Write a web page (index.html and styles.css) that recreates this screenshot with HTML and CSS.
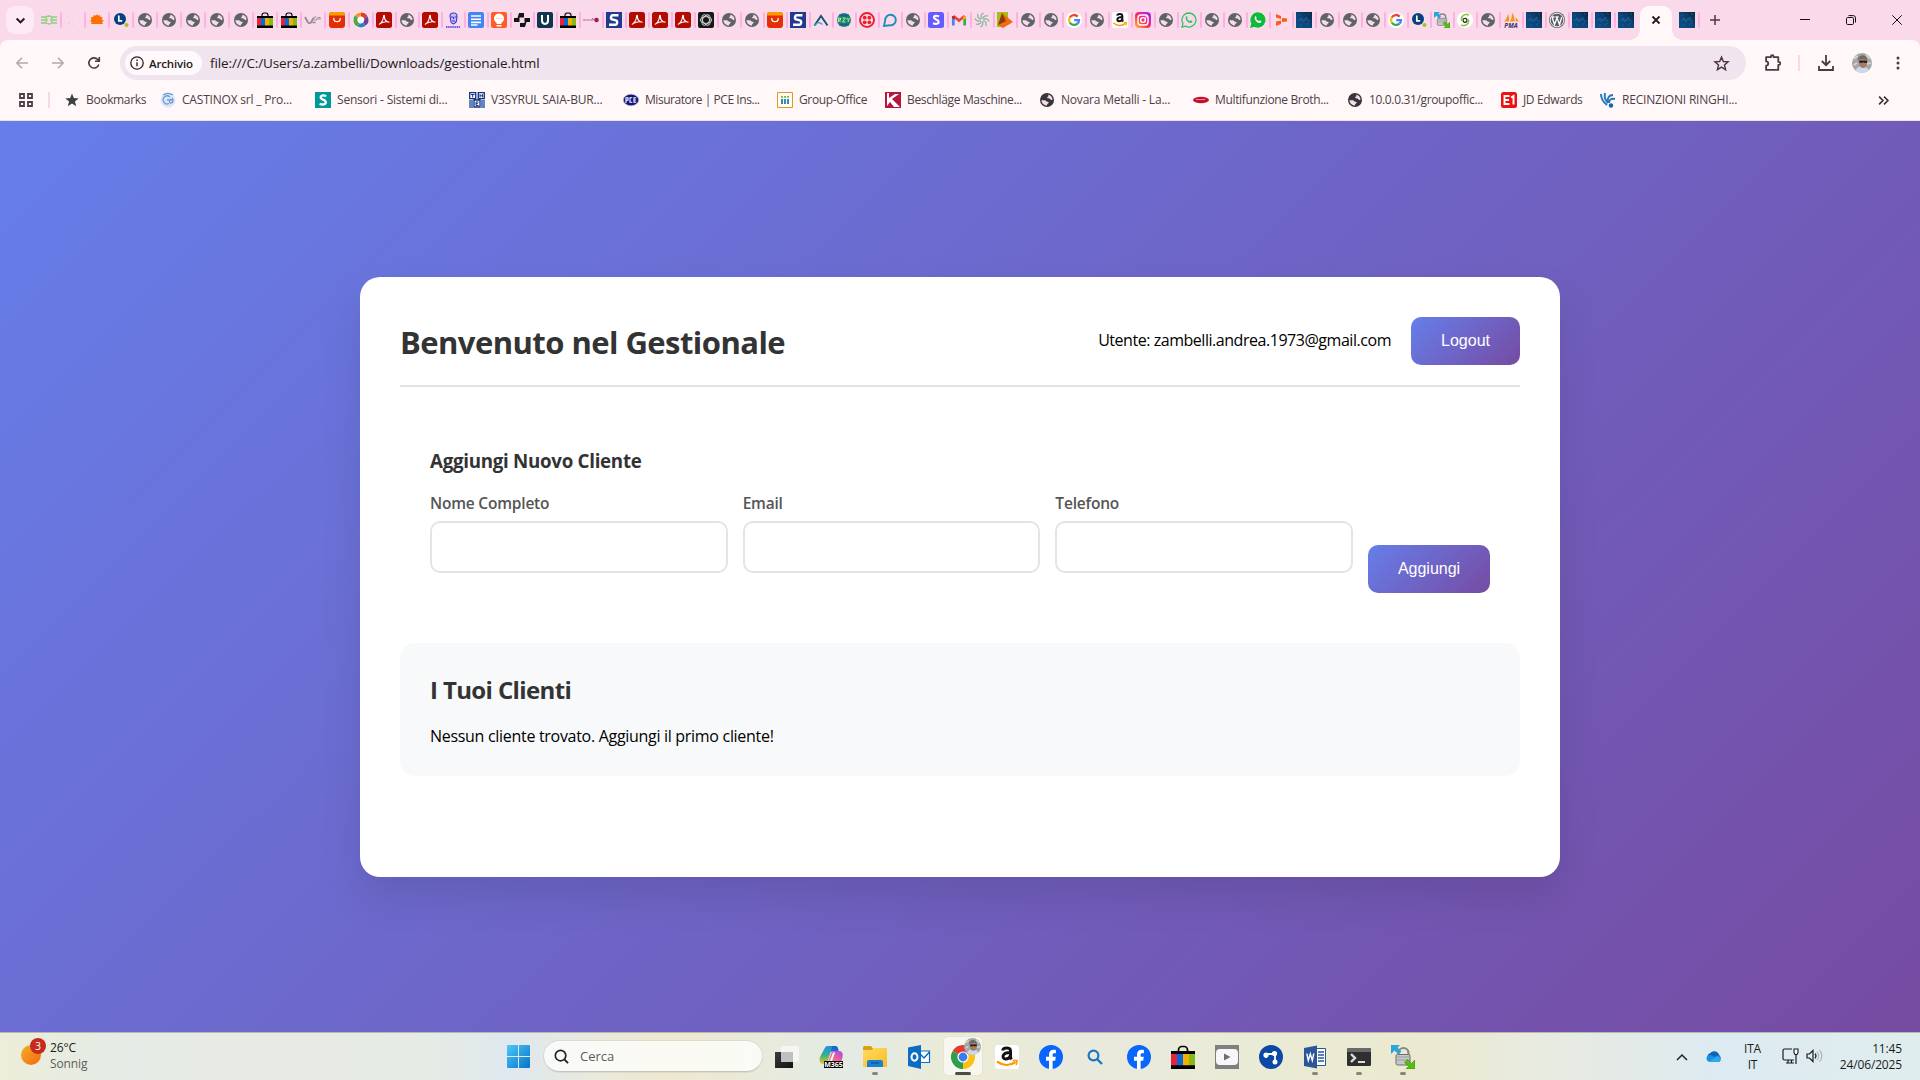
FILE: index.html
```html
<!DOCTYPE html>
<html lang="it">
<head>
<meta charset="utf-8">
<title>Gestionale</title>
<link rel="stylesheet" href="styles.css">
</head>
<body>
<svg class="defs" aria-hidden="true">
  <defs>
    <linearGradient id="gWin" x1="0" y1="0" x2="1" y2="1"><stop offset="0" stop-color="#4cc8f8"/><stop offset="1" stop-color="#0674c8"/></linearGradient>
    <linearGradient id="gInsta" x1="0" y1="1" x2="1" y2="0"><stop offset="0" stop-color="#ffc93c"/><stop offset=".4" stop-color="#fb3a4a"/><stop offset=".75" stop-color="#d61ec0"/><stop offset="1" stop-color="#7a3cf0"/></linearGradient>
    <linearGradient id="gSun" x1="0" y1="0" x2="1" y2="1"><stop offset="0" stop-color="#f0b429"/><stop offset=".5" stop-color="#f58a1c"/><stop offset="1" stop-color="#ee6a0a"/></linearGradient>
    <linearGradient id="gFold" x1="0" y1="0" x2="1" y2="1"><stop offset="0" stop-color="#ffdc60"/><stop offset="1" stop-color="#f9bb2a"/></linearGradient>
    <linearGradient id="gCopA" x1="0" y1="0" x2="0" y2="1"><stop offset="0" stop-color="#1f8fe8"/><stop offset=".5" stop-color="#35b28a"/><stop offset="1" stop-color="#f2c51c"/></linearGradient>
    <linearGradient id="gCopB" x1="1" y1="0" x2="0" y2="1"><stop offset="0" stop-color="#a04be8"/><stop offset=".5" stop-color="#e85aa8"/><stop offset="1" stop-color="#ff9a54"/></linearGradient>
    <linearGradient id="gDark" x1="0" y1="0" x2="1" y2="1"><stop offset="0" stop-color="#3c3c3c"/><stop offset="1" stop-color="#111"/></linearGradient>
    <linearGradient id="gTech" x1="0" y1="1" x2="1" y2="0"><stop offset="0" stop-color="#0b4f8a"/><stop offset=".5" stop-color="#0c4577"/><stop offset="1" stop-color="#08243f"/></linearGradient>
  </defs>
  <symbol id="globe" viewBox="0 0 16 16"><circle cx="8" cy="8" r="7" fill="currentColor"/><path class="cut" d="M9.200 2.600c2.400.5 4.200 2.600 4.400 5-.5.5-1 .6-1.700.3-.5-.3-.6-1.100-1.300-1.400-.8-.3-1.800.1-2.300-.5-.5-.7.200-1.300.8-1.600.5-.3.400-1 .1-1.800zM2.400 8.300h3.300c1.400 0 1.500 1.300 2.600 1.500.8.200 1.300 0 1.400.8 0 .9-1.300 1.100-1.600 1.900-.2.400-.2.800-.1 1.100-3-.1-5.400-2.400-5.600-5.300z"/></symbol>
  <symbol id="bag" viewBox="0 0 16 16"><path d="M5 5V3.200A2.200 2.200 0 0 1 7.200 1h1.600A2.200 2.200 0 0 1 11 3.200V5" fill="none" stroke="#000" stroke-width="1.100"/><path d="M0 4h16v12H0z"/><path d="M0 6h4v7.500H0z" fill="#e5243b"/><path d="M4 6h4v7.500H4z" fill="#0968d8"/><path d="M8 6h4v7.500H8z" fill="#f5af02"/><path d="M12 6h4v7.500h-4z" fill="#86b817"/></symbol>
  <symbol id="acro" viewBox="0 0 16 16"><rect width="16" height="16" rx="2.500" fill="#b30b00"/><path d="M3.300 12.300c1.500-.6 4.100-4 4.400-8.400 0-.7.700-.7.700 0-.1 3 1.500 5.600 4.600 6.400M4 11.400c2.200-1.200 5.500-1.900 9-1.400" fill="none" stroke="#fff" stroke-width="1.100" stroke-linecap="round"/></symbol>
  <symbol id="ali" viewBox="0 0 16 16"><rect width="16" height="16" rx="3" fill="#e62e04"/><path d="M0 3a3 3 0 0 1 3-3h10a3 3 0 0 1 3 3v.600H0z" fill="#ff9a00"/><path d="M4.800 6.500a3.200 3.200 0 0 0 6.400 0" fill="none" stroke="#fff" stroke-width="1.300" stroke-linecap="round"/></symbol>
  <symbol id="lisec" viewBox="0 0 16 16"><circle cx="7" cy="7" r="6" fill="#06407f"/><path d="M5.800 3.500v5.400h3.400" fill="none" stroke="#fff" stroke-width="1.700"/><circle cx="13.500" cy="13" r="2" fill="#a4c520"/></symbol>
  <symbol id="tech" viewBox="0 0 16 16"><path d="M0 0h16v16H0z" fill="url(#gTech)"/><path d="M2 8h2l1-2 1.500 4L8 7l1 1.500L10.500 5 12 9h2" fill="none" stroke="#2f74ad" stroke-width=".6"/><path d="M12 1l2 2M10 13l3-2M3 3l1 1M8 2v1M4 13h2" stroke="#2a679c" stroke-width=".7"/></symbol>
  <symbol id="google" viewBox="0 0 16 16"><circle cx="8" cy="8" r="8" fill="#fff"/><g fill="none" stroke-width="2.300"><path d="M11.700 4.600A5 5 0 0 0 3.700 5.500" stroke="#ea4335"/><path d="M3.700 5.500a5 5 0 0 0 0 5" stroke="#fbbc05"/><path d="M3.700 10.500a5 5 0 0 0 7.700 1.100" stroke="#34a853"/><path d="M11.400 11.600A4.700 4.700 0 0 0 13 8.200H8.200" stroke="#4285f4"/></g></symbol>
  <symbol id="amazon" viewBox="0 0 24 24"><rect width="24" height="24" rx="3" fill="#fff"/><path d="M7.800 5.500C8 2.500 15.500 1.500 15.500 6v6c0 1 .5 1.500 1.200 2.200M15.500 7.500C6 7.500 7 14 10.500 14c2.500 0 4.500-1.500 5-4" fill="none" stroke="#111" stroke-width="3"/><path d="M2 16.500c6 4.500 13 4.500 18.500.5" fill="none" stroke="#ff9900" stroke-width="2.200"/><path d="M17.500 15.500h4.500l-.8 4.500" fill="none" stroke="#ff9900" stroke-width="1.500"/></symbol>
  <symbol id="essebox" viewBox="0 0 16 16"><path d="M0 0h16v16H0z" fill="#203a8f"/><path d="M12.500 3.200H6.800c-2 0-2.600 3.600-.6 4.200l3.600 1c2.200.6 1.600 4.400-.6 4.400H3" fill="none" stroke="#fff" stroke-width="2.400"/></symbol>
  <symbol id="winscp" viewBox="0 0 24 24"><path d="M7.500 11V8a5 5 0 0 1 10 0v3" fill="none" stroke="#888" stroke-width="2.200"/><rect x="5" y="9.500" width="14" height="10.500" rx="1.500" fill="#c8c8c8" stroke="#6e6e6e"/><path d="M6 12h12M6 15h12" stroke="#9b9b9b"/><path d="M0 0h9L6.500 2.600l4 4-3 3-4-4L0 9z" fill="#2aa7d8"/><path d="M24 24h-9l2.500-2.600-4-4 3-3 4 4L24 15z" fill="#55bd14" stroke="#358a08" stroke-width=".6"/></symbol>
  <symbol id="photo" viewBox="0 0 20 20"><circle cx="10" cy="10" r="10" fill="#a3a8a4"/><path d="M1.500 6l4-3M14 2l4 4M2 12l3-2M15 11l4-1" stroke="#d5d8d3" stroke-width="1.600"/><path d="M3.500 17.500C5 14 7 13.500 10 13.500s6 1.500 7 3.600A10 10 0 0 1 3.500 17.500z" fill="#c9d9ee"/><ellipse cx="11" cy="9.500" rx="4" ry="5.500" fill="#a87862"/><path d="M6 8c-1-7 9-8 9.500-1l-.5 1-1-2H7.500z" fill="#6d6c69"/><path d="M7 7.700h8v2h-3l-.8-.8-.8.800H7.500z" fill="#1a1a1a"/></symbol>
  <symbol id="facebook" viewBox="0 0 24 24"><circle cx="12" cy="12" r="12" fill="#0866ff"/><path d="M10 24v-8.300H7v-3.900h3V9.700c0-3.400 1.700-5 4.700-5 .8 0 1.600.1 2.200.2v3.300h-1.700c-1.100 0-1.600.6-1.600 1.700v1.900h3.200l-.6 3.900h-2.600V24z" fill="#fff"/></symbol>
  <symbol id="whats" viewBox="0 0 16 16"><path d="M8 1a7 7 0 0 0-6 10.600L1 15l3.500-.9A7 7 0 1 0 8 1z" class="wa"/><path d="M5 4.500c.6-.6 1-.4 1.200.2l.4 1c.1.4-.3.700-.5 1 .6 1.200 1.500 2 2.700 2.500.4-.3.700-1 1.100-.8l1.300.7c.5.300-.1 1.700-1.100 1.900C7.500 11.500 3.500 7.500 5 4.500z" class="ph"/></symbol>
</svg>

<header class="browser">
  <div class="tabstrip">
    <div class="tabsearch"><svg viewBox="0 0 10 10"><path d="M1.500 3.200L5 6.700l3.500-3.500" fill="none" stroke="#241a20" stroke-width="1.900"/></svg></div>
    <div class="tabs loose">
      <i class="tab"><svg viewBox="0 0 16 16"><path d="M0 5h4.500l1.500 3-1.500 3H0M16 5h-4.500L10 8l1.500 3H16M0 8h5M11 8h5M5 5c2-1.300 4-1.300 6 0M5 11c2 1.300 4 1.300 6 0" fill="none" stroke="#8fd07a" stroke-width="1.300"/></svg></i>
      <i class="tab"><svg viewBox="0 0 16 16"><path d="M3 4h1M7 6h1M3 11h2M8 13h1" stroke="#e6cfdb" stroke-width="1.500"/></svg></i>
      <i class="tab"><svg viewBox="0 0 16 16"><path d="M5 3l2 .8L8 2l1.200 1.800L11 3l.5 2 2.200.2-.9 2L15 9l-2 .8L14 12H2l.8-2L1 9l1.500-1.500L1.800 5.300 4 5z" fill="#fd7000"/></svg></i>
      <i class="tab"><svg><use href="#lisec"/></svg></i>
      <i class="tab"><svg><use href="#globe"/></svg></i>
      <i class="tab"><svg><use href="#globe"/></svg></i>
      <i class="tab"><svg><use href="#globe"/></svg></i>
      <i class="tab"><svg><use href="#globe"/></svg></i>
      <i class="tab"><svg><use href="#globe"/></svg></i>
      <i class="tab"><svg><use href="#bag"/></svg></i>
      <i class="tab"><svg><use href="#bag"/></svg></i>
      <i class="tab"><svg viewBox="0 0 16 16"><path d="M0 5l3 5.500c1 1 2 1 3 0L8.500 6M7.500 10.500h3" fill="none" stroke="#8b8b8b" stroke-width="1.700"/><path d="M11.500 5H9v3h2.500V6.500M13 8V5l1 1.500L15 5v3" fill="none" stroke="#a0979c"/></svg></i>
      <i class="tab"><svg><use href="#ali"/></svg></i>
    </div>
    <div class="tabs">
      <i class="tab"><svg viewBox="0 0 16 16"><circle cx="8" cy="8" r="8" fill="#fff"/><g fill="none" stroke-width="4"><path d="M3.500 4.500A5.500 5.500 0 0 1 8 2.500" stroke="#f39a1e"/><path d="M8 2.500a5.500 5.500 0 0 1 5 3" stroke="#e4383a"/><path d="M13 5.500A5.500 5.500 0 0 1 11.500 12" stroke="#6f3f96"/><path d="M11.500 12a5.500 5.500 0 0 1-6 1" stroke="#2f7fc2"/><path d="M5.500 13a5.500 5.500 0 0 1-2-8.500" stroke="#4fa64a"/></g></svg></i>
      <i class="tab"><svg><use href="#acro"/></svg></i>
      <i class="tab"><svg><use href="#globe"/></svg></i>
      <i class="tab"><svg><use href="#acro"/></svg></i>
      <i class="tab"><svg viewBox="0 0 16 16"><path d="M5 4c0-4 7-4 7 0l-.5 5c-1 3-4 4-5.500 1zM6 5h2M9.500 5h2M7 9h3M8.500 5v2" fill="#c7bff2" stroke="#3e35e6" stroke-width="1.100"/><path d="M1 15h14" stroke="#3e35e6" stroke-width="1.500" stroke-dasharray="1.500 .6"/></svg></i>
      <i class="tab"><svg viewBox="0 0 16 16"><rect width="16" height="16" rx="2" fill="#4285f4"/><path d="M3 4h10M3 7.200h10M3 10.400h10M3 13h6.500" stroke="#fff" stroke-width="1.600"/></svg></i>
      <i class="tab"><svg viewBox="0 0 16 16"><rect width="16" height="16" rx="2" fill="#ff5a28"/><circle cx="8" cy="6.500" r="5" fill="#fff"/><path d="M5.500 11h5v1h-5zM5.500 13h5v1.500h-5z" fill="#fff"/><path d="M5 6.500h6" stroke="#ffd8cb"/></svg></i>
      <i class="tab"><svg viewBox="0 0 16 16"><path d="M5 1h5v4.500H5.500V10H0V6h3.500zM11 15H6v-4h4.500V6H16v4h-3.500z" fill="#101814"/></svg></i>
      <i class="tab"><svg viewBox="0 0 16 16"><rect width="16" height="16" rx="2" fill="#12344d"/><path d="M5 3v5.500c0 4.500 6 4.500 6 0V3" fill="none" stroke="#fff" stroke-width="2"/></svg></i>
      <i class="tab"><svg><use href="#bag"/></svg></i>
      <i class="tab"><svg viewBox="0 0 16 16"><path d="M0 8h10" stroke="#c38aa8" stroke-width="1.300" stroke-dasharray="3 .6"/><circle cx="13.500" cy="8" r="2.300" fill="#a01c55"/><path d="M9 6l3 3" stroke="#c65a86"/></svg></i>
      <i class="tab"><svg><use href="#essebox"/></svg></i>
      <i class="tab"><svg><use href="#acro"/></svg></i>
      <i class="tab"><svg><use href="#acro"/></svg></i>
      <i class="tab"><svg><use href="#acro"/></svg></i>
      <i class="tab"><svg viewBox="0 0 16 16"><rect width="16" height="16" rx="2" fill="#171717"/><g fill="none" stroke="#ddd" stroke-width=".9"><ellipse cx="8" cy="8" rx="5.700" ry="3.400"/><ellipse cx="8" cy="8" rx="5.700" ry="3.400" transform="rotate(60 8 8)"/><ellipse cx="8" cy="8" rx="5.700" ry="3.400" transform="rotate(120 8 8)"/></g></svg></i>
      <i class="tab"><svg><use href="#globe"/></svg></i>
      <i class="tab"><svg><use href="#globe"/></svg></i>
      <i class="tab"><svg><use href="#ali"/></svg></i>
      <i class="tab"><svg><use href="#essebox"/></svg></i>
      <i class="tab"><svg viewBox="0 0 16 16"><path d="M1.500 13.500L8 4l6.500 9.500" fill="none" stroke="#1b4f7c" stroke-width="1.900"/><path d="M1.500 13.500c3-3.500 5-3.700 8-1" fill="none" stroke="#31a8b8" stroke-width="1.400"/></svg></i>
      <i class="tab"><svg viewBox="0 0 16 16"><circle cx="8" cy="8" r="7" fill="#178a78"/><path d="M3 3.500h10M3 12.500h10" stroke="#1f5d8d" stroke-width="1.800"/><path d="M2.500 10V6h2v2h-2l2 2M6.500 6h2.800l-2.800 4h2.800M11 6l1.300 2L13.700 6M12.300 8v2" fill="none" stroke="#c9f08a" stroke-width=".9"/></svg></i>
      <i class="tab"><svg viewBox="0 0 16 16"><circle cx="8" cy="8" r="7" fill="#fbdcea" stroke="#ee1c2e" stroke-width="1.900"/><g fill="#ee1c2e"><circle cx="5.700" cy="5.700" r="1.900"/><circle cx="10.300" cy="5.700" r="1.900"/><circle cx="5.700" cy="10.300" r="1.900"/><circle cx="10.300" cy="10.300" r="1.900"/></g></svg></i>
      <i class="tab"><svg viewBox="0 0 16 16"><path d="M2 14l1.200-6A5.300 5.300 0 1 1 8 13.300z" fill="none" stroke="#1a90b8" stroke-width="1.900"/></svg></i>
      <i class="tab"><svg><use href="#globe"/></svg></i>
      <i class="tab"><svg viewBox="0 0 16 16"><rect width="16" height="16" rx="2.500" fill="#635bff"/><path d="M11 4.500C8 3 5.800 4 6 5.700c.2 2 4.700 1.800 4.700 4.200 0 2-3 2.600-5.700 1.300" fill="none" stroke="#fff" stroke-width="2.200"/></svg></i>
      <i class="tab"><svg viewBox="0 0 16 16"><g fill="none" stroke-width="2.700"><path d="M2.300 13.500V4" stroke="#4285f4"/><path d="M13.700 13.500V4" stroke="#34a853"/><path d="M2.300 4L8 8.500 13.700 4" stroke="#ea4335"/></g><path d="M12.300 4.200h2.700v2l-2.700 1.600z" fill="#fbbc04"/><path d="M1 4.200h2.700v3.600L1 6z" fill="#c5221f"/></svg></i>
      <i class="tab"><svg viewBox="0 0 16 16"><g fill="none" stroke="#7caf92" stroke-width="1.100"><path id="ray" d="M8 6.500C6 5 7 2 9.500 1"/><use href="#ray" transform="rotate(45 8 8)"/><use href="#ray" transform="rotate(90 8 8)"/><use href="#ray" transform="rotate(135 8 8)"/><use href="#ray" transform="rotate(180 8 8)"/><use href="#ray" transform="rotate(225 8 8)"/><use href="#ray" transform="rotate(270 8 8)"/><use href="#ray" transform="rotate(315 8 8)"/></g></svg></i>
      <i class="tab"><svg viewBox="0 0 16 16"><path d="M0 0h11v9l-6 6H0z" fill="#a6bf12"/><path d="M5 1l11 9-10 6-5-3z" fill="#f06a10"/><path d="M5 1l4 8-8 4z" fill="#8a3a14"/></svg></i>
      <i class="tab"><svg><use href="#globe"/></svg></i>
      <i class="tab"><svg><use href="#globe"/></svg></i>
      <i class="tab"><svg><use href="#google"/></svg></i>
      <i class="tab"><svg><use href="#globe"/></svg></i>
      <i class="tab"><svg><use href="#amazon"/></svg></i>
      <i class="tab"><svg viewBox="0 0 16 16"><rect width="16" height="16" rx="4" fill="url(#gInsta)"/><rect x="3" y="3" width="10" height="10" rx="3" fill="none" stroke="#fff" stroke-width="1.400"/><circle cx="8" cy="8" r="2.400" fill="none" stroke="#fff" stroke-width="1.400"/><circle cx="11" cy="5" r=".8" fill="#fff"/></svg></i>
      <i class="tab"><svg><use href="#globe"/></svg></i>
      <i class="tab wa-line"><svg><use href="#whats"/></svg></i>
      <i class="tab"><svg><use href="#globe"/></svg></i>
      <i class="tab"><svg><use href="#globe"/></svg></i>
      <i class="tab wa-full"><svg><use href="#whats"/></svg></i>
      <i class="tab"><svg viewBox="0 0 16 16"><path d="M3 2l5 2v3L3 5.500zM3 9.500L8 8.500v3.500l-5 2zM9 6l5 .500v3L9 10z" fill="#ff5b1c"/></svg></i>
      <i class="tab"><svg><use href="#tech"/></svg></i>
      <i class="tab"><svg><use href="#globe"/></svg></i>
      <i class="tab"><svg><use href="#globe"/></svg></i>
      <i class="tab"><svg><use href="#globe"/></svg></i>
      <i class="tab"><svg><use href="#google"/></svg></i>
      <i class="tab"><svg><use href="#lisec"/></svg></i>
      <i class="tab"><svg><use href="#winscp"/></svg></i>
      <i class="tab"><svg viewBox="0 0 16 16"><circle cx="8" cy="8" r="8" fill="#fff"/><circle cx="8" cy="8.300" r="2" fill="none" stroke="#1c2a1c" stroke-width="1.200"/><path d="M12 3C7 1 3 5 5 9M4 13c5 2 9-2 7-6" fill="none" stroke="#8cc63f" stroke-width="1.600"/></svg></i>
      <i class="tab"><svg><use href="#globe"/></svg></i>
      <i class="tab"><svg viewBox="0 0 16 16"><path d="M1 9.500C3 7.500 4 5 5 2c1 3 1.500 5 1 7.500zM7 9.500C8.500 7 9 4 9 .500c2 3 3 6 2.500 9zM12.500 9.500c.5-2 .5-3 0-4.500 1.500 1.500 2.500 3 3 4.500z" fill="#f7941d"/><text x="8" y="15.500" font-size="6.300" font-weight="700" font-style="italic" text-anchor="middle" fill="#35325f">PMA</text></svg></i>
      <i class="tab"><svg><use href="#tech"/></svg></i>
      <i class="tab"><svg viewBox="0 0 16 16"><circle cx="8" cy="8" r="8" fill="#5b6063"/><circle cx="8" cy="8" r="6.800" fill="none" stroke="#fff" stroke-width=".9"/><path d="M3 5l2.500 7.500L8 6l2.500 6.500L12.800 5M2.500 5h3M6.500 5h3" fill="none" stroke="#fff" stroke-width="1.300"/></svg></i>
      <i class="tab"><svg><use href="#tech"/></svg></i>
      <i class="tab"><svg><use href="#tech"/></svg></i>
      <i class="tab last"><svg><use href="#tech"/></svg></i>
    </div>
    <div class="tab-active"><svg viewBox="0 0 10 10"><path d="M1.500 1.500l7 7M8.500 1.500l-7 7" stroke="#241a20" stroke-width="1.800"/></svg></div>
    <div class="tabs after"><i class="tab"><svg><use href="#tech"/></svg></i></div>
    <svg class="newtab" viewBox="0 0 10 10"><path d="M5 0v10M0 5h10" stroke="#4c3743" stroke-width="1.500"/></svg>
    <div class="wincontrols">
      <svg viewBox="0 0 10 10"><path d="M0 4.500h10" stroke="#111"/></svg>
      <svg viewBox="0 0 10 10"><rect x=".5" y="2.500" width="7" height="7" rx="1.200" fill="none" stroke="#111"/><path d="M2.500.6h4.700a2.300 2.300 0 0 1 2.300 2.300v4.600" fill="none" stroke="#111"/></svg>
      <svg viewBox="0 0 10 10"><path d="M.3.3l9.400 9.400M9.700.3L.3 9.700" stroke="#111"/></svg>
    </div>
  </div>

  <div class="toolbar">
    <svg class="nav off" viewBox="0 0 12 12"><path d="M12 6H1M6 .8L.9 6 6 11.200"/></svg>
    <svg class="nav off" viewBox="0 0 12 12"><path d="M0 6h11M6 .8L11.100 6 6 11.200"/></svg>
    <svg class="nav" viewBox="0 0 12 12"><path d="M10.800 7.500a5.100 5.100 0 1 1-.9-4.800L11.300 4M11.300 0v4.300H7"/></svg>
    <div class="omnibox">
      <span class="chip"><svg viewBox="0 0 14 14"><circle cx="7" cy="7" r="6.200" fill="none" stroke="#2b2228" stroke-width="1.300"/><path d="M7 6.200v4M7 3.600v1.400" stroke="#2b2228" stroke-width="1.400"/></svg><b>Archivio</b></span>
      <span class="url">file:///C:/Users/a.zambelli/Downloads/gestionale.html</span>
      <svg class="star" viewBox="0 0 24 24"><path d="M12 3l2.600 6.200 6.700.5-5.100 4.400 1.600 6.600L12 17.200l-5.800 3.500 1.600-6.600L2.700 9.700l6.700-.5z" fill="none" stroke="#4c3743" stroke-width="2"/></svg>
    </div>
    <svg class="ext" viewBox="0 0 17 17"><path d="M2 3h4.500V2.500a1.300 1.300 0 0 1 2.600 0V3h4.400v4.500h.5a1.400 1.400 0 0 1 0 2.800h-.5V15H2v-4a2 2 0 0 0 0-4z" fill="none" stroke="#4c3743" stroke-width="1.700" stroke-linejoin="round"/></svg>
    <i class="vsep"></i>
    <svg class="dl" viewBox="0 0 16 16"><path d="M8 0v10M3.800 6L8 10.200 12.200 6M1 11v4h14v-4" fill="none" stroke="#4c3743" stroke-width="1.800"/></svg>
    <svg class="me"><use href="#photo"/></svg>
    <svg class="dots" viewBox="0 0 4 14"><circle cx="2" cy="2" r="1.500"/><circle cx="2" cy="7" r="1.500"/><circle cx="2" cy="12" r="1.500"/></svg>
  </div>

  <div class="bookmarks">
    <svg class="apps" viewBox="0 0 14 14"><path d="M1 1h4v4H1zM9 1h4v4H9zM1 9h4v4H1zM9 9h4v4H9z" fill="none" stroke="#4c3f47" stroke-width="1.800"/></svg>
    <i class="vsep"></i>
    <a class="bm w96"><svg viewBox="0 0 16 16"><path d="M8 1.600l1.800 4.500 4.900.3-3.800 3.100 1.300 4.800L8 11.600l-4.200 2.700 1.300-4.800-3.800-3.100 4.900-.3z" fill="#3d4043"/></svg><span>Bookmarks</span></a>
    <a class="bm w155 airy"><svg viewBox="0 0 16 16"><circle cx="8" cy="8" r="7.500" fill="#dbe7f7"/><g fill="none" stroke="#6f9bd8" stroke-width="1.300"><path d="M10 5a4 4 0 1 0-1 6.500M7 8h6M12 6c2 2 1 5-1 5s-2-3 0-4M3 3c3-2 7-2 10 0"/></g></svg><span>CASTINOX srl _ Pro...</span></a>
    <a class="bm airy"><svg viewBox="0 0 16 16"><path d="M0 0h16v16H0z" fill="#009999"/><path d="M11.200 4.200C8 2.700 5.400 3.700 5.600 5.600c.2 2.200 5.200 2 5.200 4.700 0 2.200-3.200 2.900-6.200 1.400" fill="none" stroke="#fff" stroke-width="2.300"/></svg><span>Sensori - Sistemi di...</span></a>
    <a class="bm airy"><svg viewBox="0 0 16 16"><path d="M0 0h16v16H0z" fill="#e8eefb"/><path d="M.7.700h6v6h-6zM9.300.700h6v6h-6zM5 8h6v7H5z" fill="#fff" stroke="#16337c" stroke-width="1.300"/><path d="M0 8h4v8H0zM12 8h4v8h-4z" fill="#6484bd"/><path d="M2 2.500h3.500M3.700 2.500V5.500M11 2v3.500M13.600 2v3.500M11 3.800h2.500M9.500 10H7v3.500h2.500M7 11.700h2" fill="none" stroke="#16337c"/></svg><span>V3SYRUL SAIA-BUR...</span></a>
    <a class="bm tight"><svg viewBox="0 0 16 16"><ellipse cx="8" cy="8" rx="7.700" ry="5.800" fill="#14147c" stroke="#b9b9d0" stroke-width=".7"/><path d="M3 11V5.700h2v2.500H3M9.300 5.700H7v4.600h2.300M13.300 5.700H11v4.600h2.300M11 8h2" fill="none" stroke="#fff" stroke-width="1.100"/></svg><span>Misuratore | PCE Ins...</span></a>
    <a class="bm w108"><svg viewBox="0 0 16 16"><path d="M.5.5h15v15H.5z" fill="#fffdf8" stroke="#e5951a"/><path d="M5 7v5M8 7v5M11 7v5" stroke="#1f7fa8" stroke-width="1.800"/><path d="M5 4v1.700M8 4v1.700M11 4v1.700" stroke="#74a93a" stroke-width="1.800"/></svg><span>Group-Office</span></a>
    <a class="bm"><svg viewBox="0 0 16 16"><path d="M0 0h16v16H0z" fill="#b5173b"/><path d="M2 1h2v5l6-4h4L7 7l8 8H9L5 10l-3 4z" fill="#fff"/></svg><span>Beschläge Maschine...</span></a>
    <a class="bm dark airy"><svg><use href="#globe"/></svg><span>Novara Metalli - La...</span></a>
    <a class="bm"><svg viewBox="0 0 16 16"><ellipse cx="8" cy="8" rx="8" ry="3.300" fill="#c4122a"/><path d="M3 7.500h9" stroke="#e98b96"/></svg><span>Multifunzione Broth...</span></a>
    <a class="bm dark"><svg><use href="#globe"/></svg><span>10.0.0.31/groupoffic...</span></a>
    <a class="bm w99"><svg viewBox="0 0 16 16"><rect width="16" height="16" rx="2.500" fill="#ee1111"/><path d="M8.500 4H3.500v8h5M3.500 8h4.500M10 5.500L12.500 4v8.500" fill="none" stroke="#fff" stroke-width="1.900"/></svg><span>JD Edwards</span></a>
    <a class="bm airy"><svg viewBox="0 0 16 16"><g fill="none" stroke="#2278b8" stroke-width="1.900"><path d="M1 2c0 5 2 8 6 11M5 1c-1 4 0 7 3 10M13 3c-4 0-6 3-5 7M15 7c-4-1-6 1-6 4"/></g><circle cx="11" cy="13.500" r="2.200" fill="#0f64aa"/></svg><span>RECINZIONI RINGHI...</span></a>
    <svg class="more" viewBox="0 0 10 8"><path d="M1 .5L4.500 4 1 7.500M5.500.5L9 4 5.500 7.500" fill="none" stroke="#3b3036" stroke-width="1.500"/></svg>
  </div>
</header>

<main class="page">
  <section class="card">
    <div class="card-head">
      <h1>Benvenuto nel Gestionale</h1>
      <div class="user"><span>Utente: zambelli.andrea.1973@gmail.com</span><button class="btn">Logout</button></div>
    </div>
    <div class="form-box">
      <h3>Aggiungi Nuovo Cliente</h3>
      <form class="row">
        <div class="field"><label>Nome Completo</label><input type="text"></div>
        <div class="field"><label>Email</label><input type="text"></div>
        <div class="field"><label>Telefono</label><input type="text"></div>
        <button type="button" class="btn add">Aggiungi</button>
      </form>
    </div>
    <div class="list-box">
      <h2>I Tuoi Clienti</h2>
      <p>Nessun cliente trovato. Aggiungi il primo cliente!</p>
    </div>
  </section>
</main>

<footer class="taskbar">
  <div class="weather">
    <span class="sun"><svg viewBox="0 0 20 20"><circle cx="10" cy="10" r="10" fill="url(#gSun)"/></svg><b class="badge">3</b></span>
    <span class="wtext"><span>26°C</span><span class="muted">Sonnig</span></span>
  </div>
  <div class="apps-row">
    <svg class="start" viewBox="0 0 23 23"><path d="M0 1a1 1 0 0 1 1-1h10v11H0zM12 0h10a1 1 0 0 1 1 1v10H12zM0 12h11v11H1a1 1 0 0 1-1-1zM12 12h11v10a1 1 0 0 1-1 1H12z" fill="url(#gWin)"/></svg>
    <div class="search"><svg viewBox="0 0 16 16"><circle cx="7" cy="7" r="5.600" fill="none" stroke="#222" stroke-width="1.800"/><path d="M11 11l4 4" stroke="#222" stroke-width="2"/></svg><span>Cerca</span></div>
    <span class="app"><svg viewBox="0 0 24 24"><path d="M0 7h18v16H0z" fill="url(#gDark)"/><path d="M6 1h18v16H6z" fill="#f5f5f5"/><path d="M6 7h12v10H6z" fill="#c0c0c0"/></svg></span>
    <span class="app"><svg viewBox="0 0 24 24"><path d="M5 4.500C6 2 7 1 9 1h7c2 0 3 1.500 3.500 4H15c-2 0-3 1-4 4l-2 6c-1 2.500-2 4-4.500 4C0 19 0 14 1.500 11z" fill="url(#gCopA)"/><path d="M13 1h3c2 0 3 1.500 3.500 5H15l-3 1z" fill="#1769d0"/><path d="M15 6h5c4 0 4.500 4 3 8l-1 3H9l3-8c.8-2 1.500-3 3-3z" fill="url(#gCopB)"/><path d="M14 7.500h2L13 16h-2z" fill="#fff"/><path d="M5 16h19v7H5z"/><text x="14.500" y="22.100" font-size="7" font-weight="700" text-anchor="middle" fill="#fff">M365</text></svg></span>
    <span class="app run"><svg viewBox="0 0 24 24"><path d="M0 2.500A1.500 1.500 0 0 1 1.500 1H8l2 2.500V7H0z" fill="#dfa010"/><path d="M0 5h9l1.500-2H22.500A1.500 1.500 0 0 1 24 4.500V21a1 1 0 0 1-1 1H1a1 1 0 0 1-1-1z" fill="url(#gFold)"/><path d="M4 22v-5a2 2 0 0 1 2-2h12a2 2 0 0 1 2 2v5z" fill="#1a80cf"/><path d="M8 18h8" stroke="#0b5ea8" stroke-width="1.500"/></svg></span>
    <span class="app"><svg viewBox="0 0 24 24"><path d="M12 6h10.500v11.500H12z" fill="#fff" stroke="#0a6cc4" stroke-width="1.200"/><path d="M12 8l5 5 5.500-6" fill="none" stroke="#0a6cc4" stroke-width="1.500"/><path d="M1 2.500L14 0v24L1 21z" fill="#0a6cc4"/><ellipse cx="7.500" cy="12" rx="3" ry="3.700" fill="none" stroke="#fff" stroke-width="2"/></svg></span>
    <span class="app current"><svg viewBox="0 0 24 24"><circle cx="12" cy="12" r="12" fill="#fff"/><path d="M12 12L1.600 6A12 12 0 0 1 22.400 6z" fill="#e33b2e"/><path d="M12 12L22.400 6A12 12 0 0 1 12 24z" fill="#fbc116"/><path d="M12 12v12A12 12 0 0 1 1.600 6z" fill="#2f9e4c"/><circle cx="12" cy="12" r="5.600" fill="#fff"/><circle cx="12" cy="12" r="4.400" fill="#3b7ded"/></svg><svg class="mini"><use href="#photo"/></svg></span>
    <span class="app"><svg><use href="#amazon"/></svg></span>
    <span class="app"><svg><use href="#facebook"/></svg></span>
    <span class="app"><svg viewBox="0 0 24 24"><circle cx="10.500" cy="10.500" r="4.900" fill="none" stroke="#1b78c2" stroke-width="2.200"/><path d="M14 14l5 5" stroke="#1b78c2" stroke-width="2.400"/></svg></span>
    <span class="app"><svg><use href="#facebook"/></svg></span>
    <span class="app"><svg><use href="#bag"/></svg></span>
    <span class="app"><svg viewBox="0 0 24 24"><path d="M0 0h24v24H0z" fill="#7f7f7f"/><rect x="1" y="4" width="22" height="16" rx="4" fill="#f7f7f7"/><path d="M9 8.500l6.500 3.500L9 15.500z" fill="#6e6e6e"/></svg></span>
    <span class="app"><svg viewBox="0 0 24 24"><circle cx="12" cy="12" r="12" fill="#0a4aa6"/><path d="M7 9h9v8M7 9v4" fill="none" stroke="#fff" stroke-width="1.800"/><circle cx="7" cy="10" r="2.600" fill="#fff"/><circle cx="15.500" cy="8.500" r="2.600" fill="#fff"/><circle cx="16" cy="17" r="2.500" fill="#fff"/></svg></span>
    <span class="app run"><svg viewBox="0 0 24 24"><path d="M13 3.500h9.500v17H13z" fill="#fff" stroke="#2b579a"/><path d="M15 7h6M15 10h6M15 13h6M15 16h6" stroke="#2b579a" stroke-width="1.300"/><path d="M1 3l13-2.500v23L1 21z" fill="#2b579a"/><path d="M3.800 8.500l1.500 7L7.300 9l2 6.500 1.500-7" fill="none" stroke="#fff" stroke-width="1.400"/></svg></span>
    <span class="app run"><svg viewBox="0 0 24 24"><rect y="3" width="24" height="18" rx="1.500" fill="#2f2f2f"/><path d="M0 4.500A1.500 1.500 0 0 1 1.500 3h21A1.500 1.500 0 0 1 24 4.500V7H0z" fill="#6a6a6a"/><path d="M4 9l4 4-4 4" fill="none" stroke="#ddd" stroke-width="2.400"/><path d="M11 17h7" stroke="#ddd" stroke-width="2"/></svg></span>
    <span class="app run"><svg><use href="#winscp"/></svg></span>
  </div>
  <div class="tray">
    <svg class="caret" viewBox="0 0 12 8"><path d="M1 7l5-5 5 5" fill="none" stroke="#222" stroke-width="1.500"/></svg>
    <svg class="cloud" viewBox="0 0 16 11"><path d="M2 8a4 4 0 0 1 2.500-6A5 5 0 0 1 13 3.500L15 7z" fill="#0a64b8"/><path d="M3.500 11A3.500 3.500 0 0 1 3 4.200c2-.4 3 .3 5 1.800l3-1.500A3.500 3.500 0 0 1 13 11z" fill="#1790e0"/><path d="M3 10.500L11 5.500a3 3 0 0 1 2 5.500H4z" fill="#31a8ee"/></svg>
    <span class="lang"><span>ITA</span><span>IT</span></span>
    <svg class="net" viewBox="0 0 17 16"><path d="M10 1H2.500A1.500 1.500 0 0 0 1 2.500v8A1.500 1.500 0 0 0 2.500 12H12M4 15h8M6 12v3M9.500 12v3M14 7v9" fill="none" stroke="#1b1b1b" stroke-width="1.200"/><path d="M12 1h4v3.500L15 6.500h-2L12 4.500z" fill="#fff" stroke="#1b1b1b" stroke-width="1.100"/></svg>
    <svg class="vol" viewBox="0 0 17 14"><path d="M1 5h2.500L7 1.500v11L3.500 9H1z" fill="none" stroke="#1b1b1b" stroke-width="1.200"/><path d="M9 4.700a3.500 3.500 0 0 1 0 4.600" fill="none" stroke="#1b1b1b" stroke-width="1.200"/><path d="M11 3a6 6 0 0 1 0 8M13.500 1.200a8.500 8.500 0 0 1 0 11.600" fill="none" stroke="#aab4b8" stroke-width="1.200"/></svg>
    <span class="clock"><span>11:45</span><span>24/06/2025</span></span>
  </div>
</footer>
</body>
</html>
```
FILE: styles.css
```css
* { box-sizing: border-box; margin: 0; padding: 0; }
html, body { width: 1920px; height: 1080px; overflow: hidden; }
body { display: flex; flex-direction: column; font-family: "Open Sans", "Noto Sans", sans-serif; color: #000; }
svg { display: block; flex: none; overflow: visible; }
.defs { position: absolute; width: 0; height: 0; }

/* browser chrome */
.browser { flex: none; height: 121px; background: #fad9ea; border-bottom: 1px solid #f1dfe6; }
.tabstrip { display: flex; height: 40px; padding: 6px 0 0 6px; }
.tabsearch { width: 28px; height: 28px; margin-right: 7px; border-radius: 9px; background: #fdeaf4; display: grid; place-items: center; }
.tabsearch svg { width: 11px; height: 11px; }
.tabs { display: flex; padding-top: 6px; height: 22px; }
.tab { display: flex; width: 23px; height: 16px; color: #5f6368; }
.loose .tab { width: 24px; }
.tab svg { width: 16px; height: 16px; }
.tab::after { content: ""; width: 2px; height: 16px; margin-left: 3px; background: #fcb2e0; border-radius: 1px; }
.tab.last { width: 22px; }
.tab.last::after { display: none; }
.cut { fill: #f7dbe8; }
.wa-line { --wf: none; --ws: #2fc565; --wp: #2fc565; }
.wa-full svg { background: #fff; border-radius: 50%; }
.wa-full { --wf: #10b83c; --ws: #10b83c; --wp: #fff; }
.wa { fill: var(--wf); stroke: var(--ws); stroke-width: 1.300px; }
.ph { fill: var(--wp); }
.tab-active { position: relative; width: 32px; height: 34px; background: #fff7f8; border-radius: 9px 9px 0 0; display: flex; justify-content: center; padding-top: 9px; }
.tab-active::before, .tab-active::after { content: ""; position: absolute; bottom: 0; width: 10px; height: 10px; }
.tab-active::before { right: 100%; background: radial-gradient(circle at 0 0, transparent 9.500px, #fff7f8 10px); }
.tab-active::after { left: 100%; background: radial-gradient(circle at 100% 0, transparent 9.500px, #fff7f8 10px); }
.tab-active svg { width: 10px; height: 10px; }
.after { margin-left: 7px; }
.newtab { width: 10px; height: 10px; margin: 9px 0 0 8px; }
.wincontrols { display: flex; gap: 36px; margin: 9px 0 0 auto; padding-right: 18px; }
.wincontrols svg { width: 10px; height: 10px; }

.toolbar { display: flex; align-items: center; height: 46px; padding: 0 15px 0 16px; background: #fff7f8; border-radius: 8px 8px 0 0; }
.nav { width: 12px; height: 12px; margin-right: 24px; fill: none; stroke: #4c3743; stroke-width: 1.600px; }
.nav.off { stroke: #b3a9ae; }
.omnibox { display: flex; align-items: center; width: 1626px; height: 34px; margin-left: -4px; padding: 0 16px 0 5px; border-radius: 17px; background: #f0e4ee; }
.chip { display: flex; align-items: center; gap: 5px; width: 77px; height: 24px; padding-left: 5px; border-radius: 12px; background: #fff9fb; font-size: 11.500px; color: #241a20; }
.chip b { font-weight: 600; letter-spacing: -0.150px; }
.chip svg { width: 14px; height: 14px; }
.url { margin-left: 8px; font-size: 13.500px; letter-spacing: -0.120px; color: #241a20; }
.star { width: 17px; height: 17px; margin-left: auto; }
.ext { width: 18px; height: 18px; margin-left: 18px; }
.vsep { width: 2px; height: 16px; background: #fbd5ea; }
.toolbar .vsep { margin-left: 16px; }
.dl { width: 16px; height: 16px; margin-left: 18px; }
.me { width: 20px; height: 20px; margin-left: 18px; }
.dots { width: 4px; height: 14px; margin-left: auto; margin-right: 5px; fill: #4c3743; }

.bookmarks { display: flex; align-items: center; height: 34px; padding: 0 31px 6px 19px; background: #fff7f8; font-size: 12px; color: #4c3f47; }
.apps { width: 14px; height: 14px; }
.bookmarks .vsep { margin: 0 14px 0 15px; }
.bm { display: flex; align-items: center; gap: 6px; width: 154px; white-space: nowrap; letter-spacing: -0.350px; }
.bm svg { width: 16px; height: 16px; }
.bm span { padding-bottom: 1px; color: #4c3f47; }
.bm.airy { letter-spacing: -0.200px; }
.bm.tight { letter-spacing: -0.450px; }
.bm.dark { color: #33373a; }
.dark .cut { fill: #fff7f8; }
.w96 { width: 96px; } .w155 { width: 155px; } .w108 { width: 108px; } .w99 { width: 99px; }
.more { width: 11px; height: 9px; margin-left: auto; }

/* page */
.page { flex: none; display: flex; align-items: center; justify-content: center; height: 911px; background: linear-gradient(135deg, #667eea 0%, #764ba2 100%); }
.card { width: 1200px; height: 600px; padding: 40px; border-radius: 20px; background: #fff; box-shadow: 0 20px 40px rgba(0,0,0,.1); }
.card-head { display: flex; align-items: center; justify-content: space-between; height: 70px; padding-bottom: 20px; border-bottom: 2px solid #e1e5e9; }
h1 { font-size: 31px; line-height: 43px; letter-spacing: -0.550px; color: #333; padding-top: 3px; }
.user { display: flex; align-items: center; gap: 20px; font-size: 16px; letter-spacing: -0.460px; }
.user span { padding-bottom: 1px; }
.btn { width: 109px; height: 48px; border: 0; border-radius: 10px; background: linear-gradient(135deg, #667eea 0%, #764ba2 100%); color: #fff; font: 16px "Liberation Sans", Arial, sans-serif; }
.form-box { height: 206px; margin: 30px 0 20px; padding: 30px; }
h3 { padding-top: 1px; font-size: 18.720px; line-height: 25px; letter-spacing: -0.270px; color: #333; }
.row { display: flex; gap: 15px; margin-top: 19px; align-items: flex-end; }
.field { flex: 1; height: 101px; padding-top: 1px; }
label { display: block; font-size: 15.500px; font-weight: 600; line-height: 21px; letter-spacing: -0.200px; color: #555; margin-bottom: 7px; }
input { display: block; width: 100%; height: 52px; border: 2px solid #e1e5e9; border-radius: 10px; background: #fff; }
.add { width: 122px; }
.list-box { height: 133px; padding: 31px 30px 29px; border-radius: 15px; background: #f8f9fa; }
h2 { font-size: 24px; line-height: 32px; letter-spacing: -0.620px; color: #333; }
.list-box p { margin-top: 20px; font-size: 16px; line-height: 21px; letter-spacing: -0.300px; }

/* taskbar */
.taskbar { flex: none; display: grid; grid-template-columns: 507px 1fr auto; align-items: center; height: 48px; border-top: 1px solid #b5b9b0; font-size: 12px; color: #1b1b1b;
  background: linear-gradient(90deg, #edeed8 0, #e8ece0 60px, #e5ebe6 130px, #e8ebe3 250px, #e5ebe5 430px, #dfe8ef 510px, #e9e9dd 590px, #eee8d0 670px, #e6ebe0 800px, #e4ebe4 860px, #ebebd6 960px, #e9e9dd 1080px, #eaebd6 1250px, #ebe9cf 1430px, #e8ebdf 1530px, #e4eae6 1620px, #dcebf2 1720px, #e0edee 1920px); }
.weather { display: flex; align-items: flex-start; height: 47px; padding: 12px 0 0 21px; }
.sun { position: relative; }
.sun svg { width: 20px; height: 20px; }
.badge { position: absolute; left: 9px; top: -7px; width: 16px; height: 16px; border-radius: 50%; background: #c42b1c; color: #fff; font-size: 10.500px; font-weight: 400; line-height: 16px; text-align: center; }
.wtext { display: flex; flex-direction: column; margin: -5px 0 0 9px; line-height: 16px; letter-spacing: -0.100px; }
.muted { color: #5c5f5c; }
.apps-row { display: flex; align-items: center; }
.start { width: 23px; height: 23px; }
.search { display: flex; align-items: center; gap: 11px; width: 218px; height: 31px; margin: 0 3px 0 14px; padding-left: 10px; border-radius: 16px; background: rgba(255,255,255,.75); border-bottom: 1px solid #c4c5bb; box-shadow: 0 0 0 1px rgba(120,120,100,.12); font-size: 13px; color: #5c5c5c; }
.search svg { width: 15px; height: 15px; }
.app { position: relative; display: grid; place-items: center; width: 44px; height: 47px; }
.app svg { width: 24px; height: 24px; }
.app.run::after, .app.current::after { content: ""; position: absolute; bottom: 5px; width: 6px; height: 3px; border-radius: 2px; background: #868680; }
.app.current::after { width: 16px; background: #4b4b47; }
.app.current::before { content: ""; position: absolute; left: 3px; top: 4px; width: 38px; height: 38px; border-radius: 4px; background: rgba(255,255,255,.6); box-shadow: 0 0 1px #bbb; }
.app.current svg { position: relative; }
.app.current .mini { position: absolute; left: 23px; top: 5px; width: 17px; height: 17px; }
.tray { display: flex; align-items: center; padding-right: 18px; line-height: 16px; }
.caret { width: 12px; height: 8px; margin-right: 18px; }
.cloud { width: 16px; height: 11px; margin-right: 21px; }
.lang, .clock { display: flex; flex-direction: column; letter-spacing: -0.150px; }
.lang { align-items: center; width: 19px; }
.net { width: 17px; height: 16px; margin: 0 0 1px 20px; }
.vol { width: 17px; height: 14px; margin: 0 0 1px 7px; }
.clock { align-items: flex-end; width: 62px; margin-left: 17px; }
```
